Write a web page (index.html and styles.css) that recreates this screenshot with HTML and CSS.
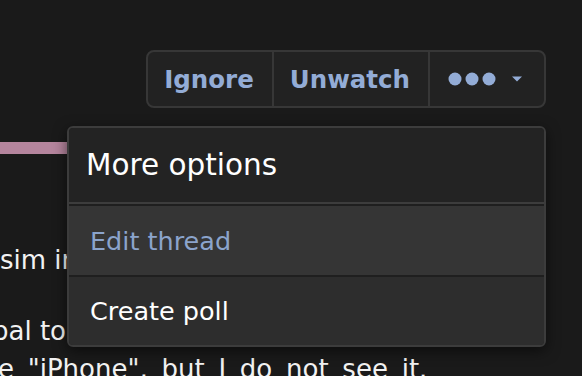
FILE: index.html
```html
<!DOCTYPE html>
<html>
<head>
<meta charset="utf-8">
<link rel="stylesheet" href="styles.css">
</head>
<body>
<div class="page">
  <div class="toolbar">
    <div class="btn-group">
      <div class="btn">Ignore</div>
      <div class="btn">Unwatch</div>
      <div class="btn btn-more">
        <svg class="dots" width="48" height="14" viewBox="0 0 48 14"><circle cx="7" cy="7" r="6.5" fill="#93acd6"/><circle cx="24" cy="7" r="6.5" fill="#93acd6"/><circle cx="41" cy="7" r="6.5" fill="#93acd6"/></svg>
        <svg class="caret" width="10" height="6" viewBox="0 0 10 6"><path d="M0 0.5 H10 L5 5.5 Z" fill="#93acd6"/></svg>
      </div>
    </div>
  </div>
  <div class="content">
    <div class="bar"></div>
    <div class="text">
      <p class="para">sim in my new phone and</p>
      <p class="para"><span class="cut">pal to change the name to</span><br><span class="stretch">e "iPhone", but I do not see it.</span></p>
    </div>
  </div>
  <div class="menu">
    <div class="menu-header">More options</div>
    <div class="menu-item active">Edit thread</div>
    <div class="menu-item">Create poll</div>
  </div>
</div>
</body>
</html>
```

FILE: styles.css
```css
html, body {
  margin: 0;
  padding: 0;
  background: #1a1a1a;
  overflow: hidden;
}
body {
  width: 582px;
  height: 376px;
  font-family: "DejaVu Sans", Verdana, sans-serif;
  color: #f2f2f2;
}
.page {
  position: relative;
  height: 376px;
  overflow: hidden;
}
.toolbar {
  display: flex;
  justify-content: flex-end;
  padding: 50px 36px 0 0;
}
.btn-group {
  display: flex;
  height: 58px;
  box-sizing: border-box;
  border: 2px solid #373737;
  border-radius: 8px;
  background: #222222;
}
.btn {
  display: flex;
  align-items: center;
  padding: 0 18px 0 16px;
  font-weight: bold;
  font-size: 24.5px;
  color: #93acd6;
}
.btn + .btn {
  border-left: 2px solid #373737;
}
.btn-more {
  padding: 0 22px 0 18px;
  gap: 16px;
}
.content {
  padding-top: 34px;
}
.bar {
  width: 330px;
  height: 12px;
  background: #b5859d;
}
.text {
  margin-top: 87px;
  width: 546px;
  font-size: 26px;
  line-height: 38px;
  white-space: nowrap;
}
.para {
  margin: 0 0 33px 0;
}
.cut {
  margin-left: -8px;
}
.stretch {
  margin-left: -2px;
  word-spacing: 5.5px;
}
.menu {
  position: absolute;
  left: 67px;
  top: 126px;
  width: 479px;
  box-sizing: border-box;
  border: 2px solid #3c3c3c;
  border-radius: 6px;
  overflow: hidden;
  background: #232323;
  box-shadow: 0 4px 14px rgba(0, 0, 0, 0.55);
}
.menu-header {
  height: 74px;
  display: flex;
  align-items: center;
  padding-left: 17px;
  font-size: 29.5px;
  color: #ffffff;
  background: #232323;
  border-bottom: 2px solid #3d3d3d;
}
.menu-item {
  display: flex;
  align-items: center;
  height: 68px;
  padding-left: 21px;
  font-size: 25.5px;
  color: #ffffff;
  background: #2d2d2d;
  border-top: 2px solid #1f1f1f;
}
.menu-item.active {
  height: 69px;
  color: #8ba4cc;
  background: #353535;
}
```
